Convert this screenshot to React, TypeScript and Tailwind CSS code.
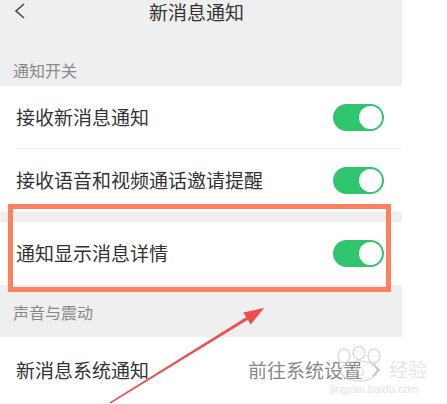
import React from "react";

const font = { fontFamily: '"Noto Sans CJK SC", "Noto Sans", sans-serif' };

const Toggle = () => (
   <div className="w-[51px] h-[27px] rounded-full bg-[#2fc56f] flex items-center justify-end pr-[2px]">
      <div className="w-[23px] h-[23px] rounded-full bg-white"></div>
   </div>
);

const SwitchRow = ({ label, divider }: { label: string; divider?: boolean }) => (
   <div className="bg-white pl-4">
      <div
         className={`h-[63px] flex items-center justify-between pr-[18px] ${
            divider ? "border-b border-[#f0f0f0]" : ""
         }`}
      >
         <span className="text-[19px] text-[#333]">{label}</span>
         <Toggle />
      </div>
   </div>
);

const App = () => {
   return (
      <div className="relative w-[447px] h-[404px] bg-white overflow-hidden" style={font}>
         <div className="w-[402px]">
            <div className="bg-[#efefef] h-[86px] pl-[13px]">
               <div className="relative h-[22px] flex items-center justify-center pr-[22px]">
                  <svg
                     className="absolute left-[1px] top-[3px]"
                     width="12"
                     height="16"
                     viewBox="0 0 12 16"
                  >
                     <polyline
                        points="10,1 2,8 10,15"
                        fill="none"
                        stroke="#444"
                        strokeWidth="1.6"
                     />
                  </svg>
                  <span className="text-[19px] leading-none text-[#333]">新消息通知</span>
               </div>
               <div className="mt-[38px] h-[20px] flex items-center text-[16px] text-[#888]">
                  通知开关
               </div>
            </div>

            <SwitchRow label="接收新消息通知" divider />
            <SwitchRow label="接收语音和视频通话邀请提醒" />
            <div className="h-[10px] bg-[#efefef]"></div>
            <SwitchRow label="通知显示消息详情" />

            <div className="bg-[#efefef] h-[52px] pl-[13px] flex items-center pt-[2px] text-[16px] text-[#888]">
               声音与震动
            </div>

            <div className="bg-white h-[66px] pl-4 pr-[22px] flex items-center justify-between">
               <span className="text-[19px] text-[#333]">新消息系统通知</span>
               <div className="flex items-center gap-[10px]">
                  <span className="text-[19px] text-[#888]">前往系统设置</span>
                  <svg width="8" height="14" viewBox="0 0 8 14">
                     <polyline
                        points="1,1 7,7 1,13"
                        fill="none"
                        stroke="#bbb"
                        strokeWidth="1.5"
                     />
                  </svg>
               </div>
            </div>
         </div>

         {/* watermark */}
         <div className="absolute left-[330px] top-[346px] flex flex-col items-start opacity-70">
            <div className="flex items-end gap-[1px]">
               <svg width="58" height="36" viewBox="0 0 58 36">
                  <g fill="none" stroke="#cfcfcf" strokeWidth="1.5">
                     <ellipse cx="14" cy="10" rx="6" ry="7" />
                     <ellipse cx="29" cy="7" rx="6" ry="6.5" />
                     <ellipse cx="44" cy="10" rx="6" ry="7" />
                     <ellipse cx="29" cy="25" rx="18" ry="10" />
                  </g>
                  <text x="20" y="30" fontSize="13" fill="#d4d4d4" fontFamily="Liberation Sans, sans-serif">
                     du
                  </text>
               </svg>
               <span className="text-[19px] leading-[26px] text-[#dcdcdc]">经验</span>
            </div>
            <span
               className="text-[11px] leading-none text-[#d8d8d8] mt-[2px]"
               style={{ fontFamily: '"Liberation Sans", sans-serif' }}
            >
               jingyan.baidu.com
            </span>
         </div>

         {/* highlight box */}
         <div className="absolute left-[8px] top-[204px] w-[383px] h-[88px] border-[5px] border-[#fd8160]"></div>

         {/* arrow */}
         <svg className="absolute left-0 top-0" width="447" height="404" viewBox="0 0 447 404">
            <polygon
               points="109.4,402.4 246.2,317.2 243.3,312.5 264,308 250.7,324.5 247.8,319.8 110.6,403.6"
               fill="#ef4c4c"
            />
         </svg>
      </div>
   );
};

export default App;
